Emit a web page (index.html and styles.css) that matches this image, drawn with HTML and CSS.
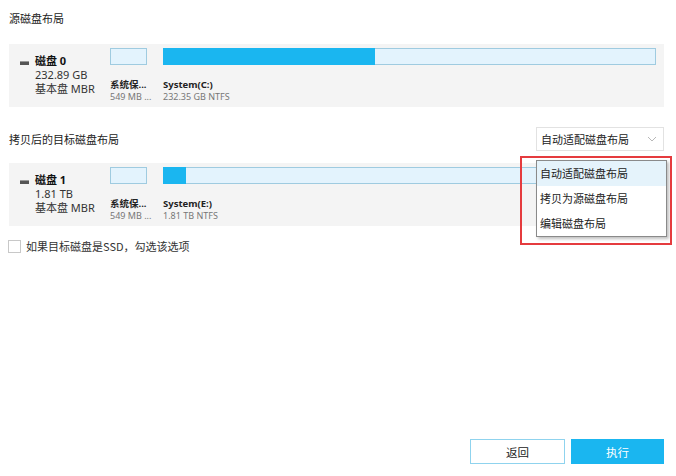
FILE: index.html
```html
<!DOCTYPE html>
<html lang="zh-CN">
  <head>
    <meta charset="utf-8">
    <meta name="viewport" content="width=device-width, initial-scale=1">
    <title>磁盘克隆</title>
    <link rel="stylesheet" href="styles.css">
  </head>
  <body>
    <div class="page">
      <p class="section-title">源磁盘布局</p>

      <div class="disk">
        <div class="disk-info">
          <p class="disk-name"><span class="disk-icon"></span>磁盘 0</p>
          <p>232.89 GB</p>
          <p>基本盘 MBR</p>
        </div>
        <div class="partitions">
          <div class="part part-small">
            <div class="part-bar"></div>
            <p class="part-name">系统保...</p>
            <p class="part-size">549 MB ...</p>
          </div>
          <div class="part part-main">
            <div class="part-bar"><span class="part-used" style="width: 43%"></span></div>
            <p class="part-name">System(C:)</p>
            <p class="part-size">232.35 GB NTFS</p>
          </div>
        </div>
      </div>

      <div class="target-row">
        <p class="section-title">拷贝后的目标磁盘布局</p>
        <div class="select">
          <span>自动适配磁盘布局</span>
          <svg class="chevron" viewBox="0 0 10 6" width="10" height="6">
            <path d="M1 1 L5 5 L9 1" fill="none" stroke="#b8b8b8" stroke-width="1"/>
          </svg>
          <div class="highlight"></div>
          <ul class="select-menu">
            <li class="active">自动适配磁盘布局</li>
            <li>拷贝为源磁盘布局</li>
            <li>编辑磁盘布局</li>
          </ul>
        </div>
      </div>

      <div class="disk disk-target">
        <div class="disk-info">
          <p class="disk-name"><span class="disk-icon"></span>磁盘 1</p>
          <p>1.81 TB</p>
          <p>基本盘 MBR</p>
        </div>
        <div class="partitions">
          <div class="part part-small">
            <div class="part-bar"></div>
            <p class="part-name">系统保...</p>
            <p class="part-size">549 MB ...</p>
          </div>
          <div class="part part-main">
            <div class="part-bar"><span class="part-used" style="width: 4.7%"></span></div>
            <p class="part-name">System(E:)</p>
            <p class="part-size">1.81 TB NTFS</p>
          </div>
        </div>
      </div>

      <label class="check">
        <span class="check-box"></span>
        如果目标磁盘是SSD，勾选该选项
      </label>

      <div class="actions">
        <button class="btn btn-back" type="button">返回</button>
        <button class="btn btn-run" type="button">执行</button>
      </div>
    </div>
  </body>
</html>
```

FILE: styles.css
```css
html, body {
  margin: 0;
  height: 100%;
  background: #fff;
}

body {
  font-family: "Noto Sans", "Noto Sans CJK SC", sans-serif;
  font-size: 11px;
  color: #222;
}

p {
  margin: 0;
}

.page {
  display: flex;
  flex-direction: column;
  height: 100%;
  box-sizing: border-box;
  padding: 10px 12px 12px 9px;
}

.section-title {
  line-height: 16px;
  font-family: "Noto Sans CJK SC", sans-serif;
}

.disk {
  display: flex;
  height: 63px;
  margin-top: 18px;
  background: #f4f4f4;
  box-sizing: border-box;
  padding: 4px 8px 0 0;
}

.disk-info {
  width: 101px;
  box-sizing: border-box;
  padding: 6px 0 0 26px;
  line-height: 14px;
  color: #333;
}

.disk-name {
  position: relative;
  font-weight: bold;
  color: #111;
}

.disk-icon {
  position: absolute;
  left: -15px;
  top: 7px;
  width: 9px;
  height: 3px;
  background: #555;
  border-top: 1px solid #999;
}

.partitions {
  display: flex;
  flex: 1;
  gap: 16px;
}

.part-small {
  width: 37px;
}

.part-main {
  flex: 1;
}

.part-bar {
  display: flex;
  height: 17px;
  box-sizing: border-box;
  background: #e3f3fd;
  border: 1px solid #9fcbe0;
}

.part-main .part-bar {
  border-left: 0;
}

.part-used {
  display: block;
  background: #1ab6f0;
  margin: -1px 0;
}

.part-name {
  margin-top: 13px;
  line-height: 13px;
  font-size: 9.5px;
  font-weight: bold;
  white-space: nowrap;
  color: #222;
}

.part-size {
  line-height: 12px;
  font-size: 9px;
  color: #777;
  white-space: nowrap;
}

.target-row {
  display: flex;
  align-items: center;
  justify-content: space-between;
  margin-top: 20px;
}

.select {
  position: relative;
  display: flex;
  align-items: center;
  justify-content: space-between;
  width: 128px;
  height: 24px;
  box-sizing: border-box;
  padding: 0 6px 0 4px;
  border: 1px solid #e2e2e2;
  background: #fff;
  font-family: "Noto Sans CJK SC", sans-serif;
}

.select-menu {
  position: absolute;
  top: 32px;
  left: -1px;
  width: 129px;
  margin: 0;
  padding: 0;
  list-style: none;
  background: #fff;
  border: 1px solid #8a8a8a;
  box-shadow: 2px 2px 3px rgba(0, 0, 0, 0.25);
  z-index: 2;
}

.select-menu li {
  height: 25px;
  line-height: 25px;
  padding-left: 3px;
}

.select-menu li.active {
  background: #e5f3fb;
}

.highlight {
  position: absolute;
  top: 28px;
  left: -17px;
  width: 152px;
  height: 89px;
  box-sizing: border-box;
  border: 2px solid #e53b3e;
  z-index: 3;
  pointer-events: none;
}

.disk-target {
  margin-top: 12px;
}

.check {
  display: flex;
  align-items: center;
  gap: 5px;
  margin-top: 13px;
  margin-left: -1px;
  line-height: 14px;
  font-family: "Noto Sans CJK SC", sans-serif;
  color: #333;
}

.check-box {
  width: 11px;
  height: 11px;
  border: 1px solid #c8c8c8;
  background: #fff;
}

.actions {
  display: flex;
  justify-content: flex-end;
  gap: 6px;
  margin-top: auto;
}

.btn {
  width: 95px;
  height: 25px;
  box-sizing: border-box;
  font: inherit;
  font-family: "Noto Sans CJK SC", sans-serif;
  font-size: 11.5px;
  cursor: pointer;
}

.btn-back {
  background: #fff;
  color: #222;
  border: 1px solid #8fd3ee;
}

.btn-run {
  width: 93px;
  background: #1ab6f0;
  color: #fff;
  border: 0;
}
```
